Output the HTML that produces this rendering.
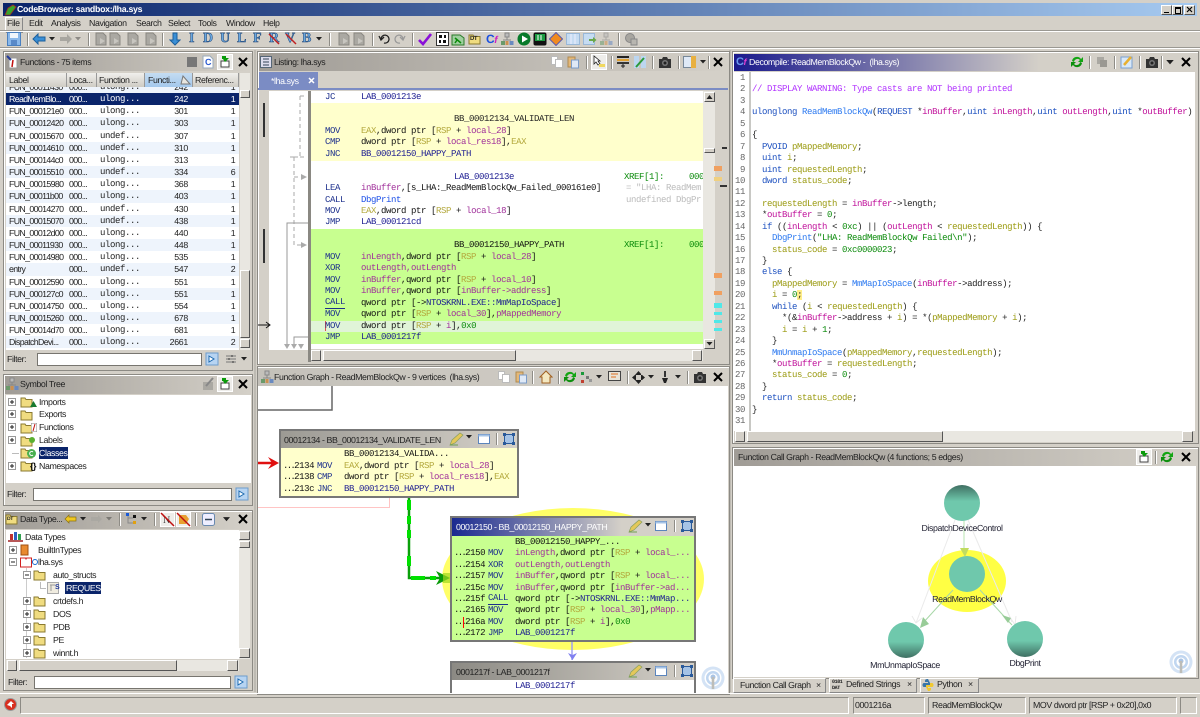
<!DOCTYPE html>
<html><head><meta charset="utf-8"><title>CodeBrowser</title>
<style>
html,body{margin:0;padding:0;width:1200px;height:717px;overflow:hidden;background:#d4d0c8;text-rendering:geometricPrecision}
#w{position:absolute;left:0;top:0;width:1200px;height:717px;overflow:hidden;background:#d4d0c8;filter:blur(.3px)}
#w div,#w svg{position:absolute}
#w div.s{position:relative}
.t{font:8.8px/12px "Liberation Sans",sans-serif;letter-spacing:-.4px;color:#222;white-space:pre}
.m{font:9px/12px "Liberation Mono",monospace;letter-spacing:-.4px;color:#111;white-space:pre}
.b{background:#fff}
.pn{border:1px solid #8c8a84;box-shadow:inset 1px 1px 0 #fff;background:#d4d0c8}
.tg{background:linear-gradient(90deg,#a09c96,#d4d0c8)}
.sb{background:#e9e7e1}
.bt{background:#d4d0c8;border:1px solid;border-color:#fff #555 #555 #fff;box-sizing:border-box}
.sep{width:1px;background:#8e8c86;border-right:1px solid #fff}
.th{background:linear-gradient(#f0efec,#cfccc4);box-sizing:border-box;border-right:1px solid #999;height:14px;top:73px}
.in{background:#fff;border:1px solid #77756f;box-sizing:border-box}
.s{width:233px;height:12.17px}
.s span{position:absolute;top:0;font:8.8px/12px "Liberation Sans",sans-serif;letter-spacing:-.65px;color:#222;white-space:pre}
.s .c1{left:3px}.s .c2{left:63px}.s .c3{left:94px;font:9px/12px "Liberation Mono",monospace;letter-spacing:-.4px}
.s .c4{right:51px;letter-spacing:-.3px}.s .c5{right:4px}
.alt{background:#eef4fc}
.sel{background:#0a246a}.sel span{color:#fff}
u{text-decoration:none}
u.d{letter-spacing:-1.7px}
.n{color:#1c2f8c}.l{color:#1a1a90}.r{color:#b3a83c}.v{color:#a0309a}.g{color:#0a8a0a}.f{color:#1b4fe8}.k{color:#222}
.cm{color:#b030ff}.ty{color:#1b4fbf}.yv{color:#9a9a10}.pa{color:#c0109a}.fn{color:#2a78f0}.ln{color:#666}
.ic{font:bold 14px/14px "Liberation Serif",serif;color:#6aa8e0;-webkit-text-stroke:.5px #1a3f70;letter-spacing:0}
.cx{transform:translateX(-50%);color:#223}
</style></head><body><div id="w">
<svg width="0" height="0" style="left:0;top:0"><defs>
<symbol id="x" viewBox="0 0 14 14"><path d="M3 3L11 11M11 3L3 11" stroke="#000" stroke-width="2" fill="none"/></symbol>
<symbol id="rf" viewBox="0 0 14 14"><path d="M2 6A5 5 0 0 1 11 4L13 2V7H8L10 5A3.500 3.500 0 0 0 4 7Z" fill="#13a613"/><path d="M12 8A5 5 0 0 1 3 10L1 12V7H6L4 9A3.500 3.500 0 0 0 10 7Z" fill="#0d8f0d"/></symbol>
<symbol id="cam" viewBox="0 0 14 14"><path d="M1 4H4L5 2H9L10 4H13V13H1Z" fill="#333"/><circle cx="7" cy="8" r="3" fill="#777"/><circle cx="7" cy="8" r="1.500" fill="#222"/></symbol>
<symbol id="cp" viewBox="0 0 14 14"><path d="M1.500 1.500H7.500V9.500H1.500Z" fill="#fff" stroke="#bbb"/><path d="M5.500 4.500H12.500V12.500H5.500Z" fill="#fff" stroke="#bbb"/></symbol>
<symbol id="ps" viewBox="0 0 14 14"><path d="M2 2H9V12H2Z" fill="#e4b878" stroke="#b08a50"/><path d="M5.500 5H12.500V13H5.500Z" fill="#dfe9f6" stroke="#7b9cc8"/></symbol>
<symbol id="fo" viewBox="0 0 14 14"><path d="M1 3H5L6 4.500H12V12H1Z" fill="#f0dc80" stroke="#8a7a30"/></symbol>
<symbol id="fi" viewBox="0 0 14 14"><rect x="1" y="1" width="12" height="12" fill="#b7d4f2" stroke="#6c9ccc"/><path d="M4 4L9 7L4 10Z" fill="#fff" stroke="#1d6ab0"/></symbol>
<symbol id="sl" viewBox="0 0 16 16"><rect x=".5" y=".5" width="15" height="15" fill="#eeedea" stroke="#fff"/><path d="M4 7H12V13H4Z" fill="#fff" stroke="#444"/><path d="M5 2H9V4H12L8 8L6 5H5Z" fill="#0a9a0a"/></symbol>
<symbol id="pl" viewBox="0 0 10 10"><rect x="1.500" y="1.500" width="7" height="7" fill="#fff" stroke="#999"/><path d="M3 5H7M5 3V7" stroke="#222"/></symbol>
<symbol id="mi" viewBox="0 0 10 10"><rect x="1.500" y="1.500" width="7" height="7" fill="#fff" stroke="#999"/><path d="M3 5H7" stroke="#222"/></symbol>
<symbol id="dd" viewBox="0 0 6 4"><path d="M0 0H6L3 3.500Z" fill="#222"/></symbol>
<symbol id="ed" viewBox="0 0 16 14"><path d="M1 13L3 8L11 1L14 3L6 11Z" fill="#e4c85a" stroke="#8aa060" stroke-width=".7"/><path d="M1 13H9" stroke="#70a050"/></symbol>
<symbol id="wn" viewBox="0 0 14 14"><rect x="1.500" y="2.500" width="11" height="9" fill="#fff" stroke="#5a84bc"/><rect x="1.500" y="2.500" width="11" height="2" fill="#a5c3e6"/></symbol>
<symbol id="mx" viewBox="0 0 14 14"><rect x="2.500" y="2.500" width="9" height="9" fill="#a5c3e6" stroke="#2a5a9a"/><path d="M1 1H4V4H1ZM10 1H13V4H10ZM1 10H4V13H1ZM10 10H13V13H10Z" fill="#2a5a9a"/></symbol>
<symbol id="tr" viewBox="0 0 14 14"><path d="M5 1H9V5H5Z" fill="#bbb" stroke="#888"/><path d="M7 5V8M3 8H11" stroke="#888"/><rect x="1" y="9" width="4" height="4" fill="#6a9a6a"/><rect x="5.500" y="9" width="3" height="4" fill="#cc9050"/><rect x="9.500" y="9" width="4" height="4" fill="#6a8ac0"/></symbol>
<symbol id="gd" viewBox="0 0 14 14"><path d="M2 1H9L12 4V13H2Z" fill="#aaa8a2" stroke="#8a8882"/><path d="M6 6L11 9L6 12Z" fill="#c8c6c0"/></symbol>
<symbol id="rad" viewBox="0 0 24 24"><circle cx="12" cy="12" r="11.500" fill="#d4e3f5"/><circle cx="12" cy="12" r="8.500" fill="#fff"/><circle cx="12" cy="12" r="7" fill="#c0d6f0"/><circle cx="12" cy="12" r="4.500" fill="#fff"/><circle cx="12" cy="11" r="2.500" fill="#aac4e4"/><rect x="10.700" y="11" width="2.600" height="12" fill="#bdbdb8"/></symbol>
</defs></svg>

<!-- title -->
<div style="left:3px;top:3px;width:1194px;height:13px;background:linear-gradient(90deg,#0a246a,#a6caf0)"></div>
<svg width="13" height="12" viewBox="0 0 13 12" style="left:4px;top:4px"><path d="M1 11L4 4L9 1L12 3L9 7L6 11Z" fill="#3aa52a" stroke="#a03020" stroke-width=".8"/></svg>
<div class="t" style="left:17px;top:3px;color:#fff;font-weight:bold;letter-spacing:-.3px">CodeBrowser: sandbox:/lha.sys</div>
<div class="bt" style="left:1161px;top:5px;width:11px;height:10px"></div><div class="bt" style="left:1172px;top:5px;width:11px;height:10px"></div><div class="bt" style="left:1184px;top:5px;width:11px;height:10px"></div>
<div style="left:1164px;top:11px;width:5px;height:1px;border-bottom:1px solid #000"></div>
<div style="left:1175px;top:7px;width:4px;height:4px;border:1px solid #000;border-top-width:2px"></div>
<svg width="7" height="7" viewBox="0 0 7 7" style="left:1186px;top:6px"><path d="M1 1L6 6M6 1L1 6" stroke="#000" stroke-width="1.200"/></svg>

<!-- menu -->
<div style="left:5px;top:17px;width:16px;height:14px;border:1px solid #fff;border-right-color:#888;border-bottom-color:#888"></div>
<div class="t" style="left:7px;top:17px">File</div>
<div class="t" style="left:29px;top:17px">Edit</div>
<div class="t" style="left:51px;top:17px">Analysis</div>
<div class="t" style="left:89px;top:17px">Navigation</div>
<div class="t" style="left:136px;top:17px">Search</div>
<div class="t" style="left:168px;top:17px">Select</div>
<div class="t" style="left:198px;top:17px">Tools</div>
<div class="t" style="left:226px;top:17px">Window</div>
<div class="t" style="left:263px;top:17px">Help</div>
<div style="left:0;top:30px;width:1200px;height:1px;background:#9a9892"></div><div style="left:0;top:31px;width:1200px;height:1px;background:#fff"></div>
<div style="left:0;top:47px;width:1200px;height:1px;background:#9a9892"></div><div style="left:0;top:48px;width:1200px;height:1px;background:#fff"></div>

<!-- main toolbar -->
<svg width="14" height="14" viewBox="0 0 14 14" style="left:7px;top:32px"><rect x=".5" y=".5" width="13" height="13" fill="#8ab8ea" stroke="#4a80c0"/><rect x="3" y="1" width="8" height="5" fill="#f0f6fc"/><rect x="4" y="8" width="6" height="5" fill="#5a8ac8"/></svg>
<div class="sep" style="left:27px;top:33px;height:13px"></div>
<svg width="14" height="12" viewBox="0 0 14 12" style="left:32px;top:33px"><path d="M1 6L6 1V4H13V8H6V11Z" fill="#3a8fd6" stroke="#1c5f9c"/></svg>
<svg width="6" height="4" style="left:49px;top:37px"><use href="#dd"/></svg>
<svg width="14" height="12" viewBox="0 0 14 12" style="left:59px;top:33px"><path d="M13 6L8 1V4H1V8H8V11Z" fill="#a8a6a0"/></svg>
<svg width="6" height="4" style="left:75px;top:37px;opacity:.4"><use href="#dd"/></svg>
<div class="sep" style="left:88px;top:33px;height:13px"></div>
<svg width="14" height="14" style="left:94px;top:32px"><use href="#gd"/></svg><svg width="14" height="14" style="left:108px;top:32px"><use href="#gd"/></svg><svg width="14" height="14" style="left:126px;top:32px"><use href="#gd"/></svg><svg width="14" height="14" style="left:144px;top:32px"><use href="#gd"/></svg>
<div class="sep" style="left:162px;top:33px;height:13px"></div>
<svg width="12" height="14" viewBox="0 0 12 14" style="left:169px;top:32px"><path d="M6 13L1 8H4V1H8V8H11Z" fill="#3a8fd6" stroke="#1c5f9c"/></svg>
<div class="ic" style="left:189px;top:32px">I</div>
<div class="ic" style="left:203px;top:32px">D</div>
<div class="ic" style="left:220px;top:32px">U</div>
<div class="ic" style="left:237px;top:32px">L</div>
<div class="ic" style="left:253px;top:32px">F</div>
<div class="ic" style="left:269px;top:32px">R</div>
<div class="ic" style="left:285px;top:32px">V</div>
<div class="ic" style="left:302px;top:32px">B</div>
<svg width="14" height="14" viewBox="0 0 14 14" style="left:267px;top:32px"><path d="M2 2L12 12" stroke="#c02020" stroke-width="1.500"/></svg><svg width="14" height="14" viewBox="0 0 14 14" style="left:284px;top:32px"><path d="M2 2L12 12" stroke="#c02020" stroke-width="1.500"/></svg>
<svg width="6" height="4" style="left:316px;top:37px"><use href="#dd"/></svg>
<div class="sep" style="left:329px;top:33px;height:13px"></div>
<svg width="14" height="14" style="left:337px;top:32px"><use href="#gd"/></svg><svg width="14" height="14" style="left:352px;top:32px"><use href="#gd"/></svg>
<div class="sep" style="left:372px;top:33px;height:13px"></div>
<svg width="12" height="12" viewBox="0 0 12 12" style="left:378px;top:33px"><path d="M3 6A4 4 0 1 1 6 10M1 3L3 7L6 4" stroke="#222" fill="none" stroke-width="1.300"/></svg>
<svg width="12" height="12" viewBox="0 0 12 12" style="left:394px;top:33px"><path d="M9 6A4 4 0 1 0 6 10M11 3L9 7L6 4" stroke="#999" fill="none" stroke-width="1.300"/></svg>
<div class="sep" style="left:412px;top:33px;height:13px"></div>
<svg width="14" height="14" viewBox="0 0 14 14" style="left:418px;top:32px"><path d="M1 8L5 12L13 2" stroke="#8a10d8" stroke-width="2.600" fill="none"/></svg>
<svg width="13" height="14" viewBox="0 0 13 14" style="left:436px;top:32px"><rect x=".5" y=".5" width="12" height="13" fill="#fff" stroke="#333"/><path d="M3 3H6V6H3ZM8 3H10V6H8ZM3 8H5V11H3ZM7 8H10V11H7Z" fill="#111"/></svg>
<svg width="14" height="14" viewBox="0 0 14 14" style="left:451px;top:32px"><path d="M1 3H9L13 6V13H1Z" fill="#9fcf9f" stroke="#2a7a2a"/><path d="M4 6L10 11M4 11L6 8" stroke="#0a8a0a" stroke-width="1.500"/></svg>
<svg width="14" height="14" style="left:468px;top:32px"><use href="#fo"/></svg><div class="t" style="left:470px;top:35px;font:bold 6px/8px 'Liberation Sans',sans-serif;color:#222">DT</div>
<div class="t" style="left:486px;top:32px;font:bold 12px/14px 'Liberation Sans',sans-serif;color:#1a4fe0">C<span style="color:#d020c0;font-style:italic;font-size:10px">f</span></div>
<svg width="14" height="14" style="left:500px;top:32px"><use href="#tr"/></svg>
<svg width="14" height="14" viewBox="0 0 14 14" style="left:517px;top:32px"><circle cx="7" cy="7" r="6.500" fill="#087a2a"/><path d="M5 3.500L11 7L5 10.500Z" fill="#fff"/></svg>
<svg width="14" height="14" viewBox="0 0 14 14" style="left:533px;top:32px"><rect x=".5" y=".5" width="13" height="13" rx="2" fill="#111"/><rect x="2" y="2" width="10" height="7" fill="#1c9a40"/><path d="M5 3V8M8 3V8" stroke="#fff"/></svg>
<svg width="14" height="14" viewBox="0 0 14 14" style="left:549px;top:32px"><path d="M7 .5L13.500 7L7 13.500L.5 7Z" fill="#f08a20" stroke="#5a5ab0"/></svg>
<svg width="14" height="14" viewBox="0 0 14 14" style="left:566px;top:32px"><rect x=".5" y="1.500" width="13" height="11" fill="#c6dcf2" stroke="#9ab8d8"/><path d="M5 2V12M9 2V12" stroke="#eef"/></svg>
<svg width="14" height="14" viewBox="0 0 14 14" style="left:583px;top:32px"><rect x=".5" y="1.500" width="11" height="11" fill="#c6dcf2" stroke="#9ab8d8"/><path d="M6 7H10V5L13.500 8L10 11V9H6Z" fill="#6aa84a"/></svg>
<svg width="14" height="14" style="left:599px;top:32px;opacity:.55"><use href="#tr"/></svg>
<div class="sep" style="left:618px;top:33px;height:13px"></div>
<svg width="14" height="14" viewBox="0 0 14 14" style="left:624px;top:32px"><circle cx="6" cy="6" r="4.500" fill="#a8a6a0" stroke="#888"/><rect x="7" y="7" width="6" height="6" fill="#b8b6b0" stroke="#888"/></svg>

<!-- dividers -->
<div style="left:254px;top:50px;width:2px;height:642px;background:#bdbab2"></div>
<div style="left:729px;top:50px;width:2px;height:642px;background:#bdbab2"></div>

<!-- FUNCTIONS PANEL -->
<div class="pn" style="left:3px;top:51px;width:248px;height:318px"></div>
<div class="tg" style="left:5px;top:53px;width:245px;height:18px"></div>
<svg width="12" height="14" viewBox="0 0 12 14" style="left:6px;top:55px"><path d="M3 3H11V13H3Z" fill="#fff" stroke="#999"/><path d="M1 1L5 5" stroke="#223a9a" stroke-width="2"/><path d="M7 5L6 12" stroke="#c01010" stroke-width="1.500"/></svg>
<div class="t" style="left:20px;top:56px">Functions - 75 items</div>
<div style="left:187px;top:57px;width:10px;height:10px;background:#777"></div>
<svg width="12" height="14" viewBox="0 0 12 14" style="left:202px;top:55px"><path d="M1 1H8L11 4V13H1Z" fill="#fff" stroke="#9ab"/></svg><div class="t" style="left:205px;top:56px;font:bold 9px/12px 'Liberation Sans',sans-serif;color:#2a5ad0">C</div>
<svg width="16" height="16" style="left:217px;top:54px"><use href="#sl"/></svg>
<svg width="14" height="14" style="left:236px;top:55px"><use href="#x"/></svg>
<div class="th" style="left:6px;width:61px"></div><div class="t" style="left:9px;top:74px">Label</div>
<div class="th" style="left:67px;width:30px"></div><div class="t" style="left:69px;top:74px">Loca...</div>
<div class="th" style="left:97px;width:48px"></div><div class="t" style="left:99px;top:74px">Function ...</div>
<div class="th" style="left:145px;width:48px;background:linear-gradient(#c4dcf2,#a4c8ec)"></div><div class="t" style="left:148px;top:74px">Functi...</div>
<svg width="11" height="10" viewBox="0 0 11 10" style="left:180px;top:75px"><path d="M1 9H10L3 1Z" fill="#e8e6e0" stroke="#777"/></svg>
<div class="th" style="left:193px;width:46px"></div><div class="t" style="left:195px;top:74px">Referenc...</div>
<div style="left:6px;top:87px;width:233px;height:263px;background:#fff;overflow:hidden"><div style="position:relative;left:0;top:-6px;width:233px">
<div class="s alt"><span class="c1">FUN_00011430</span><span class="c2">000...</span><span class="c3">ulong...</span><span class="c4">242</span><span class="c5">1</span></div>
<div class="s sel"><span class="c1">ReadMemBlo...</span><span class="c2">000...</span><span class="c3">ulong...</span><span class="c4">242</span><span class="c5">1</span></div>
<div class="s"><span class="c1">FUN_000121e0</span><span class="c2">000...</span><span class="c3">ulong...</span><span class="c4">301</span><span class="c5">1</span></div>
<div class="s alt"><span class="c1">FUN_00012420</span><span class="c2">000...</span><span class="c3">ulong...</span><span class="c4">303</span><span class="c5">1</span></div>
<div class="s"><span class="c1">FUN_00015670</span><span class="c2">000...</span><span class="c3">undef...</span><span class="c4">307</span><span class="c5">1</span></div>
<div class="s alt"><span class="c1">FUN_00014610</span><span class="c2">000...</span><span class="c3">undef...</span><span class="c4">310</span><span class="c5">1</span></div>
<div class="s"><span class="c1">FUN_000144c0</span><span class="c2">000...</span><span class="c3">ulong...</span><span class="c4">313</span><span class="c5">1</span></div>
<div class="s alt"><span class="c1">FUN_00015510</span><span class="c2">000...</span><span class="c3">undef...</span><span class="c4">334</span><span class="c5">6</span></div>
<div class="s"><span class="c1">FUN_00015980</span><span class="c2">000...</span><span class="c3">ulong...</span><span class="c4">368</span><span class="c5">1</span></div>
<div class="s alt"><span class="c1">FUN_00011b00</span><span class="c2">000...</span><span class="c3">ulong...</span><span class="c4">403</span><span class="c5">1</span></div>
<div class="s"><span class="c1">FUN_00014270</span><span class="c2">000...</span><span class="c3">undef...</span><span class="c4">430</span><span class="c5">1</span></div>
<div class="s alt"><span class="c1">FUN_00015070</span><span class="c2">000...</span><span class="c3">undef...</span><span class="c4">438</span><span class="c5">1</span></div>
<div class="s"><span class="c1">FUN_00012d00</span><span class="c2">000...</span><span class="c3">ulong...</span><span class="c4">440</span><span class="c5">1</span></div>
<div class="s alt"><span class="c1">FUN_00011930</span><span class="c2">000...</span><span class="c3">ulong...</span><span class="c4">448</span><span class="c5">1</span></div>
<div class="s"><span class="c1">FUN_00014980</span><span class="c2">000...</span><span class="c3">ulong...</span><span class="c4">535</span><span class="c5">1</span></div>
<div class="s alt"><span class="c1">entry</span><span class="c2">000...</span><span class="c3">undef...</span><span class="c4">547</span><span class="c5">2</span></div>
<div class="s"><span class="c1">FUN_00012590</span><span class="c2">000...</span><span class="c3">ulong...</span><span class="c4">551</span><span class="c5">1</span></div>
<div class="s alt"><span class="c1">FUN_000127c0</span><span class="c2">000...</span><span class="c3">ulong...</span><span class="c4">551</span><span class="c5">1</span></div>
<div class="s"><span class="c1">FUN_00014750</span><span class="c2">000...</span><span class="c3">ulong...</span><span class="c4">554</span><span class="c5">1</span></div>
<div class="s alt"><span class="c1">FUN_00015260</span><span class="c2">000...</span><span class="c3">ulong...</span><span class="c4">678</span><span class="c5">1</span></div>
<div class="s"><span class="c1">FUN_00014d70</span><span class="c2">000...</span><span class="c3">ulong...</span><span class="c4">681</span><span class="c5">1</span></div>
<div class="s alt"><span class="c1">DispatchDevi...</span><span class="c2">000...</span><span class="c3">ulong...</span><span class="c4">2661</span><span class="c5">2</span></div>
</div></div>
<div class="sb" style="left:240px;top:73px;width:10px;height:277px"></div>
<div class="bt" style="left:240px;top:90px;width:10px;height:8px"></div>
<div class="bt" style="left:240px;top:270px;width:10px;height:68px"></div>
<div class="bt" style="left:240px;top:339px;width:10px;height:9px"></div>
<div class="in" style="left:37px;top:353px;width:165px;height:13px"></div>
<div class="t" style="left:7px;top:353px">Filter:</div>
<svg width="14" height="14" style="left:205px;top:352px"><use href="#fi"/></svg>
<svg width="12" height="12" viewBox="0 0 12 12" style="left:225px;top:353px"><path d="M1 3H11M1 6H11M1 9H11" stroke="#777"/><path d="M7 2V4M4 5V7M8 8V10" stroke="#444"/></svg>
<svg width="6" height="4" style="left:241px;top:357px"><use href="#dd"/></svg>

<!-- SYMBOL TREE -->
<div class="pn" style="left:3px;top:374px;width:248px;height:130px"></div>
<div class="tg" style="left:5px;top:376px;width:245px;height:18px"></div>
<svg width="14" height="14" style="left:5px;top:377px"><use href="#tr"/></svg>
<div class="t" style="left:20px;top:378px">Symbol Tree</div>
<svg width="14" height="14" viewBox="0 0 14 14" style="left:201px;top:377px"><path d="M2 5H12V13H2Z" fill="#aaa8a2"/><path d="M5 9L12 1" stroke="#888" stroke-width="2"/></svg>
<svg width="16" height="16" style="left:217px;top:376px"><use href="#sl"/></svg>
<svg width="14" height="14" style="left:236px;top:377px"><use href="#x"/></svg>
<div class="b" style="left:6px;top:395px;width:245px;height:88px"></div>
<svg width="10" height="10" style="left:7px;top:397px"><use href="#pl"/></svg><svg width="14" height="14" style="left:20px;top:395px"><use href="#fo"/></svg><svg width="7" height="6" viewBox="0 0 7 6" style="left:30px;top:401px"><path d="M0 6L3.500 0L7 6Z" fill="#187a30"/></svg><div class="t" style="left:39px;top:396px">Imports</div>
<svg width="10" height="10" style="left:7px;top:409px"><use href="#pl"/></svg><svg width="14" height="14" style="left:20px;top:408px"><use href="#fo"/></svg><div class="t" style="left:39px;top:408px">Exports</div>
<svg width="10" height="10" style="left:7px;top:422px"><use href="#pl"/></svg><svg width="14" height="14" style="left:20px;top:421px"><use href="#fo"/></svg><svg width="6" height="9" viewBox="0 0 6 9" style="left:31px;top:423px"><rect width="6" height="9" fill="#fff" stroke="#888"/><path d="M4 1L2 8" stroke="#c01010"/></svg><div class="t" style="left:39px;top:421px">Functions</div>
<svg width="10" height="10" style="left:7px;top:435px"><use href="#pl"/></svg><svg width="14" height="14" style="left:20px;top:434px"><use href="#fo"/></svg><svg width="6" height="6" viewBox="0 0 6 6" style="left:29px;top:437px"><circle cx="3" cy="3" r="3" fill="#5ab030"/></svg><div class="t" style="left:39px;top:434px">Labels</div>
<div style="left:12px;top:453px;width:7px;height:1px;background:#bbb"></div>
<svg width="14" height="14" style="left:20px;top:446px"><use href="#fo"/></svg><svg width="9" height="9" viewBox="0 0 9 9" style="left:27px;top:449px"><circle cx="4.500" cy="4.500" r="4.500" fill="#4ab050"/><path d="M6 3A2 2 0 1 0 6 6" stroke="#fff" fill="none"/></svg>
<div style="left:39px;top:447px;width:29px;height:12px;background:#0a246a"></div><div class="t" style="left:39px;top:447px;color:#fff">Classes</div>
<svg width="10" height="10" style="left:7px;top:461px"><use href="#pl"/></svg><svg width="14" height="14" style="left:20px;top:459px"><use href="#fo"/></svg><div class="t" style="left:30px;top:460px;font-weight:bold;color:#000">{}</div><div class="t" style="left:39px;top:460px">Namespaces</div>
<div class="in" style="left:33px;top:488px;width:199px;height:13px"></div>
<div class="t" style="left:7px;top:488px">Filter:</div>
<svg width="14" height="14" style="left:235px;top:487px"><use href="#fi"/></svg>

<!-- DATA TYPES -->
<div class="pn" style="left:3px;top:510px;width:248px;height:179px"></div>
<div class="tg" style="left:5px;top:512px;width:245px;height:17px"></div>
<svg width="14" height="14" style="left:5px;top:512px"><use href="#fo"/></svg><div class="t" style="left:7px;top:515px;font:bold 5px/8px 'Liberation Sans',sans-serif">DT</div>
<div class="t" style="left:20px;top:513px">Data Type...</div>
<svg width="13" height="10" viewBox="0 0 13 10" style="left:64px;top:514px"><path d="M1 5L5 1V3H12V7H5V9Z" fill="#f0c820" stroke="#8a7010" stroke-width=".7"/></svg>
<svg width="6" height="4" style="left:80px;top:517px"><use href="#dd"/></svg>
<svg width="13" height="10" viewBox="0 0 13 10" style="left:90px;top:514px"><path d="M12 5L8 1V3H1V7H8V9Z" fill="#aaa8a2"/></svg>
<svg width="6" height="4" style="left:106px;top:517px;opacity:.4"><use href="#dd"/></svg>
<div class="sep" style="left:119px;top:513px;height:13px"></div>
<svg width="13" height="13" viewBox="0 0 13 13" style="left:125px;top:512px"><path d="M3 3V11H9M3 6H8" stroke="#888" fill="none"/><rect x="1" y="1" width="3" height="3" fill="#1a5ad8"/><rect x="8" y="3" width="3" height="3" fill="#111"/><rect x="8" y="9" width="3" height="3" fill="#e0a010"/></svg>
<svg width="6" height="4" style="left:141px;top:517px"><use href="#dd"/></svg>
<div class="sep" style="left:154px;top:513px;height:13px"></div>
<svg width="15" height="15" viewBox="0 0 15 15" style="left:160px;top:512px"><rect x=".5" y=".5" width="14" height="14" fill="#eeedea" stroke="#fff"/><text x="3" y="11" font-family="Liberation Serif" font-size="10" fill="#222">N</text><path d="M1 1L14 14" stroke="#c01010" stroke-width="1.500"/></svg>
<svg width="15" height="15" viewBox="0 0 15 15" style="left:176px;top:512px"><rect x=".5" y=".5" width="14" height="14" fill="#eeedea" stroke="#fff"/><path d="M3 3H10L13 7L10 12H3Z" fill="#e8a030"/><path d="M1 1L14 14" stroke="#c01010" stroke-width="1.500"/></svg>
<div class="sep" style="left:195px;top:513px;height:13px"></div>
<svg width="13" height="13" viewBox="0 0 13 13" style="left:202px;top:513px"><rect x=".5" y=".5" width="12" height="12" rx="2" fill="#eef" stroke="#6a8ab0"/><path d="M3 6.500H10" stroke="#345" stroke-width="1.500"/></svg>
<svg width="7" height="5" style="left:223px;top:517px"><use href="#dd"/></svg>
<svg width="14" height="14" style="left:236px;top:512px"><use href="#x"/></svg>
<div class="b" style="left:6px;top:530px;width:233px;height:129px"></div>
<svg width="16" height="12" viewBox="0 0 16 12" style="left:7px;top:531px"><rect x="3" y="3" width="3" height="6" fill="#c03030"/><rect x="7" y="1" width="3" height="8" fill="#3060c0"/><rect x="11" y="3" width="3" height="6" fill="#30a050"/><path d="M1 10H16" stroke="#a02020" stroke-width="1.500"/></svg><div class="t" style="left:25px;top:531px">Data Types</div>
<svg width="10" height="10" style="left:8px;top:545px"><use href="#pl"/></svg><svg width="10" height="12" viewBox="0 0 10 12" style="left:20px;top:544px"><path d="M1 1H8V11H1Z" fill="#e88a30" stroke="#a05010"/></svg><div class="t" style="left:38px;top:544px">BuiltInTypes</div>
<svg width="10" height="10" style="left:8px;top:557px"><use href="#mi"/></svg><svg width="12" height="11" viewBox="0 0 12 11" style="left:20px;top:557px"><path d="M.5 1H5.500L6 2L6.500 1H11.500V10H.5Z" fill="#fff" stroke="#d02020"/></svg><svg width="6" height="6" viewBox="0 0 6 6" style="left:32px;top:559px"><circle cx="3" cy="3" r="2.500" fill="#fff" stroke="#1a6ad0"/></svg><div class="t" style="left:38px;top:556px">lha.sys</div>
<div style="left:26px;top:568px;width:1px;height:90px;background:#ccc"></div>
<svg width="10" height="10" style="left:22px;top:570px"><use href="#mi"/></svg><svg width="14" height="14" style="left:33px;top:568px"><use href="#fo"/></svg><div class="t" style="left:53px;top:569px">auto_structs</div>
<div style="left:40px;top:582px;width:1px;height:6px;background:#bbb"></div><div style="left:40px;top:588px;width:6px;height:1px;background:#bbb"></div>
<svg width="12" height="12" viewBox="0 0 12 12" style="left:47px;top:582px"><rect x=".5" y=".5" width="11" height="11" fill="#f0ece0" stroke="#aaa"/><path d="M3 3L8 3M4 3V9" stroke="#999"/></svg><div class="t" style="left:55px;top:584px;font:bold 7px/8px 'Liberation Sans',sans-serif;color:#223a9a">S</div>
<div style="left:65px;top:582px;width:36px;height:12px;background:#0a246a"></div><div class="t" style="left:66px;top:582px;color:#fff">REQUEST</div>
<svg width="10" height="10" style="left:22px;top:596px"><use href="#pl"/></svg><svg width="14" height="14" style="left:33px;top:594px"><use href="#fo"/></svg><div class="t" style="left:53px;top:595px">crtdefs.h</div>
<svg width="10" height="10" style="left:22px;top:609px"><use href="#pl"/></svg><svg width="14" height="14" style="left:33px;top:607px"><use href="#fo"/></svg><div class="t" style="left:53px;top:608px">DOS</div>
<svg width="10" height="10" style="left:22px;top:622px"><use href="#pl"/></svg><svg width="14" height="14" style="left:33px;top:620px"><use href="#fo"/></svg><div class="t" style="left:53px;top:621px">PDB</div>
<svg width="10" height="10" style="left:22px;top:635px"><use href="#pl"/></svg><svg width="14" height="14" style="left:33px;top:633px"><use href="#fo"/></svg><div class="t" style="left:53px;top:634px">PE</div>
<svg width="10" height="10" style="left:22px;top:648px"><use href="#pl"/></svg><svg width="14" height="14" style="left:33px;top:646px"><use href="#fo"/></svg><div class="t" style="left:53px;top:647px">winnt.h</div>
<div class="sb" style="left:239px;top:530px;width:11px;height:129px"></div>
<div class="bt" style="left:239px;top:531px;width:11px;height:9px"></div><div class="bt" style="left:239px;top:541px;width:11px;height:7px"></div><div class="bt" style="left:239px;top:648px;width:11px;height:10px"></div>
<div class="sb" style="left:6px;top:660px;width:233px;height:11px"></div>
<div class="bt" style="left:7px;top:660px;width:10px;height:11px"></div><div class="bt" style="left:19px;top:660px;width:158px;height:11px"></div><div class="bt" style="left:227px;top:660px;width:11px;height:11px"></div>
<div class="in" style="left:34px;top:676px;width:197px;height:13px"></div>
<div class="t" style="left:8px;top:676px">Filter:</div>
<svg width="14" height="14" style="left:234px;top:675px"><use href="#fi"/></svg>

<!-- LISTING -->
<div class="pn" style="left:257px;top:51px;width:471px;height:312px"></div>
<div class="tg" style="left:259px;top:53px;width:468px;height:18px"></div>
<svg width="12" height="12" viewBox="0 0 12 12" style="left:260px;top:56px"><rect x=".5" y=".5" width="11" height="11" fill="#dde" stroke="#567"/><path d="M3 3H9M3 6H9M3 9H9" stroke="#345"/></svg>
<div class="t" style="left:274px;top:56px">Listing: lha.sys</div>
<svg width="14" height="14" style="left:550px;top:55px"><use href="#cp"/></svg><svg width="14" height="14" style="left:566px;top:55px"><use href="#ps"/></svg>
<div class="sep" style="left:586px;top:56px;height:13px"></div>
<svg width="16" height="16" viewBox="0 0 16 16" style="left:591px;top:54px"><rect x=".5" y=".5" width="15" height="15" fill="#eeedea" stroke="#fff"/><path d="M3 2V10L5 8L7 11L9 10L7 7L9 7Z" fill="#fff" stroke="#222" stroke-width=".8"/><rect x="8" y="10" width="6" height="3" fill="#f0d860"/></svg>
<div class="sep" style="left:611px;top:56px;height:13px"></div>
<svg width="14" height="14" viewBox="0 0 14 14" style="left:616px;top:55px"><rect x="1" y="1" width="12" height="2" fill="#222"/><rect x="1" y="4" width="12" height="2" fill="#e0a030"/><rect x="1" y="7" width="12" height="2" fill="#333"/><path d="M7 9V13M5 11H9" stroke="#222"/></svg>
<svg width="14" height="14" viewBox="0 0 14 14" style="left:633px;top:55px"><rect x="1" y="1" width="5" height="12" fill="#bcd6f0"/><rect x="8" y="1" width="5" height="12" fill="#bcd6f0"/><path d="M3 12L11 3" stroke="#2a9a3a" stroke-width="2"/></svg>
<div class="sep" style="left:652px;top:56px;height:13px"></div>
<svg width="14" height="14" style="left:658px;top:55px"><use href="#cam"/></svg>
<div class="sep" style="left:678px;top:56px;height:13px"></div>
<svg width="14" height="14" viewBox="0 0 14 14" style="left:683px;top:55px"><rect x=".5" y="1.500" width="9" height="11" fill="#dfe9f6" stroke="#789"/><rect x="8" y="1" width="5" height="12" fill="#e8b040"/></svg>
<svg width="6" height="4" style="left:700px;top:60px"><use href="#dd"/></svg>
<div class="sep" style="left:708px;top:56px;height:13px"></div>
<svg width="14" height="14" style="left:711px;top:55px"><use href="#x"/></svg>
<div style="left:259px;top:72px;width:59px;height:16px;background:#7b8cc4"></div>
<div class="t" style="left:271px;top:75px;color:#fff">*lha.sys</div>
<svg width="7" height="7" viewBox="0 0 7 7" style="left:308px;top:77px"><path d="M1 1L6 6M6 1L1 6" stroke="#fff" stroke-width="1.500"/></svg>
<div style="left:258px;top:88px;width:470px;height:2px;background:#7b8cc4"></div>
<div style="left:269px;top:91px;width:39px;height:259px;background:#fff"></div>
<div style="left:308px;top:91px;width:3px;height:271px;background:#8a8882"></div>
<div style="left:263px;top:103px;width:2px;height:34px;background:#333"></div>
<div style="left:263px;top:229px;width:2px;height:34px;background:#333"></div>
<svg width="52" height="262" viewBox="0 0 52 262" style="left:258px;top:91px">
<path d="M42 5V66H36M42 66H48M36 66V154H44M36 66H30M42 5H47M36 86H44" stroke="#aaa" stroke-dasharray="4 3" fill="none"/>
<path d="M50 132H29V254M50 246H36V254" stroke="#999" fill="none"/>
<path d="M43 83L49 86L43 89ZM43 151L49 154L43 157Z" fill="#aaa"/>
<path d="M26 253H32L29 258ZM33 253H39L36 258ZM40 253H46L43 258Z" fill="#aaa"/>
<path d="M0 234H11M8 231L12 234L8 237" stroke="#111" fill="none"/></svg>
<div class="b" style="left:311px;top:91px;width:392px;height:258px"></div>
<div style="left:311px;top:103px;width:392px;height:58px;background:#ffffcc"></div>
<div style="left:311px;top:229px;width:392px;height:115px;background:#c8ff90"></div>
<div style="left:311px;top:321px;width:392px;height:11px;background:#e0f4d8"></div>
<div style="left:325px;top:321px;width:1px;height:10px;background:#e05050"></div>
<div class="m n" style="left:325px;top:91px">JC</div><div class="m l" style="left:361px;top:91px">LAB_0001213e</div>
<div class="m" style="left:454px;top:113px;color:#222">BB_00012134_VALIDATE_LEN</div>
<div class="m n" style="left:325px;top:125px">MOV</div><div class="m" style="left:361px;top:125px"><u class="r">EAX</u>,dword ptr [<u class="r">RSP</u> + <u class="v">local_28</u>]</div>
<div class="m n" style="left:325px;top:136px">CMP</div><div class="m" style="left:361px;top:136px">dword ptr [<u class="r">RSP</u> + <u class="v">local_res18</u>],<u class="r">EAX</u></div>
<div class="m n" style="left:325px;top:148px">JNC</div><div class="m l" style="left:361px;top:148px">BB_00012150_HAPPY_PATH</div>
<div class="m l" style="left:454px;top:171px">LAB_0001213e</div><div class="m g" style="left:624px;top:171px">XREF[1]:</div><div class="m g" style="left:689px;top:171px;width:14px;overflow:hidden">000</div>
<div class="m n" style="left:325px;top:182px">LEA</div><div class="m" style="left:361px;top:182px"><u class="v">inBuffer</u>,[s_LHA:_ReadMemBlockQw_Failed_000161e0]</div><div class="m" style="left:626px;top:182px;color:#bbb;width:77px;overflow:hidden">= "LHA: ReadMem</div>
<div class="m n" style="left:325px;top:194px">CALL</div><div class="m f" style="left:361px;top:194px">DbgPrint</div><div class="m" style="left:626px;top:194px;color:#bbb;width:77px;overflow:hidden">undefined DbgPr</div>
<div class="m n" style="left:325px;top:205px">MOV</div><div class="m" style="left:361px;top:205px"><u class="r">EAX</u>,dword ptr [<u class="r">RSP</u> + <u class="v">local_18</u>]</div>
<div class="m n" style="left:325px;top:216px">JMP</div><div class="m l" style="left:361px;top:216px">LAB_000121cd</div>
<div class="m" style="left:454px;top:239px">BB_00012150_HAPPY_PATH</div><div class="m g" style="left:624px;top:239px">XREF[1]:</div><div class="m g" style="left:689px;top:239px;width:14px;overflow:hidden">000</div>
<div class="m n" style="left:325px;top:251px">MOV</div><div class="m" style="left:361px;top:251px"><u class="v">inLength</u>,dword ptr [<u class="r">RSP</u> + <u class="v">local_28</u>]</div>
<div class="m n" style="left:325px;top:262px">XOR</div><div class="m v" style="left:361px;top:262px">outLength,outLength</div>
<div class="m n" style="left:325px;top:274px">MOV</div><div class="m" style="left:361px;top:274px"><u class="v">inBuffer</u>,qword ptr [<u class="r">RSP</u> + <u class="v">local_10</u>]</div>
<div class="m n" style="left:325px;top:285px">MOV</div><div class="m" style="left:361px;top:285px"><u class="v">inBuffer</u>,qword ptr [<u class="v">inBuffer-&gt;address</u>]</div>
<div class="m n" style="left:325px;top:297px;border-bottom:1px solid #1c2f8c;height:11px;line-height:11px">CALL</div><div class="m" style="left:361px;top:297px">qword ptr [-&gt;<u class="l">NTOSKRNL.EXE::MmMapIoSpace</u>]</div>
<div class="m n" style="left:325px;top:308px">MOV</div><div class="m" style="left:361px;top:308px">qword ptr [<u class="r">RSP</u> + <u class="v">local_30</u>],<u class="v">pMappedMemory</u></div>
<div class="m n" style="left:325px;top:320px">MOV</div><div class="m" style="left:361px;top:320px">dword ptr [<u class="r">RSP</u> + <u class="v">i</u>],<u class="g">0x0</u></div>
<div class="m n" style="left:325px;top:331px">JMP</div><div class="m l" style="left:361px;top:331px">LAB_0001217f</div>
<div class="sb" style="left:703px;top:91px;width:12px;height:258px"></div>
<div class="bt" style="left:704px;top:92px;width:11px;height:10px"></div><div class="bt" style="left:704px;top:148px;width:11px;height:5px"></div><div class="bt" style="left:704px;top:339px;width:11px;height:10px"></div>
<svg width="7" height="4" style="left:706px;top:95px" viewBox="0 0 6 4"><path d="M0 4H6L3 0Z" fill="#222"/></svg>
<svg width="7" height="4" style="left:706px;top:342px"><use href="#dd"/></svg>
<div style="left:714px;top:166px;width:8px;height:5px;background:#f0a060"></div>
<div style="left:714px;top:177px;width:8px;height:4px;background:#f0d080"></div>
<div style="left:720px;top:185px;width:7px;height:2px;background:#333"></div>
<div style="left:722px;top:147px;width:5px;height:2px;background:#333"></div>
<div style="left:714px;top:273px;width:8px;height:5px;background:#f0a060"></div>
<div style="left:714px;top:291px;width:8px;height:4px;background:#f0a060"></div>
<div style="left:714px;top:303px;width:8px;height:5px;background:#50e8e8"></div>
<div style="left:714px;top:312px;width:8px;height:3px;background:#50e8e8"></div>
<div style="left:714px;top:320px;width:8px;height:3px;background:#50e8e8"></div>
<div style="left:714px;top:328px;width:8px;height:3px;background:#50e8e8"></div>
<div class="sb" style="left:311px;top:350px;width:392px;height:11px"></div>
<div class="bt" style="left:311px;top:350px;width:10px;height:11px"></div><div class="bt" style="left:323px;top:350px;width:193px;height:11px"></div><div class="bt" style="left:692px;top:350px;width:10px;height:11px"></div>

<!-- FUNCTION GRAPH -->
<div class="pn" style="left:257px;top:366px;width:471px;height:327px"></div>
<div class="tg" style="left:258px;top:368px;width:470px;height:18px;background:linear-gradient(90deg,#c4c1ba,#d4d0c8)"></div>
<svg width="14" height="14" style="left:260px;top:370px"><use href="#tr"/></svg>
<div class="t" style="left:274px;top:371px">Function Graph - ReadMemBlockQw - 9 vertices  (lha.sys)</div>
<svg width="14" height="14" style="left:497px;top:370px"><use href="#cp"/></svg><svg width="14" height="14" style="left:514px;top:370px"><use href="#ps"/></svg>
<div class="sep" style="left:532px;top:371px;height:13px"></div>
<svg width="14" height="14" viewBox="0 0 14 14" style="left:539px;top:370px"><path d="M1 7L7 1L13 7H11V13H3V7Z" fill="#f4e8c0" stroke="#a06020"/></svg>
<div class="sep" style="left:558px;top:371px;height:13px"></div>
<svg width="14" height="14" style="left:563px;top:370px"><use href="#rf"/></svg>
<svg width="12" height="12" viewBox="0 0 12 12" style="left:580px;top:371px"><rect x="1" y="1" width="3" height="3" fill="#1a9a3a"/><rect x="6" y="5" width="3" height="3" fill="#777"/><rect x="1" y="9" width="3" height="3" fill="#c04030"/><rect x="9" y="8" width="3" height="3" fill="#999"/></svg>
<svg width="6" height="4" style="left:596px;top:375px"><use href="#dd"/></svg>
<svg width="13" height="11" viewBox="0 0 13 11" style="left:608px;top:371px"><rect x=".5" y=".5" width="12" height="9" fill="#e8e4d8" stroke="#444"/><path d="M3 3H10M3 6H8" stroke="#e07020"/></svg>
<div class="sep" style="left:627px;top:371px;height:13px"></div>
<svg width="13" height="13" viewBox="0 0 13 13" style="left:632px;top:371px"><path d="M6.500 0L10 4H3ZM6.500 13L3 9H10ZM0 6.500L4 3V10ZM13 6.500L9 3V10Z" fill="#222"/></svg>
<svg width="6" height="4" style="left:648px;top:375px"><use href="#dd"/></svg>
<svg width="8" height="13" viewBox="0 0 8 13" style="left:661px;top:371px"><path d="M4 0V6" stroke="#333" stroke-width="2"/><path d="M1 7H7L5 12H3Z" fill="#222"/></svg>
<svg width="6" height="4" style="left:675px;top:375px"><use href="#dd"/></svg>
<div class="sep" style="left:687px;top:371px;height:13px"></div>
<svg width="14" height="14" style="left:693px;top:370px"><use href="#cam"/></svg>
<svg width="14" height="14" style="left:711px;top:370px"><use href="#x"/></svg>
<div class="b" style="left:258px;top:386px;width:470px;height:307px"></div>
<svg width="470" height="307" viewBox="258 386 470 307" style="left:258px;top:386px">
<ellipse cx="573" cy="579" rx="131" ry="71" fill="#ffff66"/>
<path d="M258 410H332V386" fill="none" stroke="#666" stroke-width="1.500"/>
<path d="M258 507.500H389.500V498" fill="none" stroke="#ffc4c4"/>
<path d="M258 463H274" stroke="#e01010" stroke-width="2.500"/><path d="M268 457L279 463L268 469L272 463Z" fill="#e01010"/>
<path d="M409 498V578H440" fill="none" stroke="#0aa00a" stroke-width="2.500"/>
<path d="M409 500V510M409 516V524M409 530V538M409 556V566M411 578H425M430 578H436" stroke="#00e000" stroke-width="4"/>
<path d="M436 571L450 578L436 585L440 578Z" fill="#0a9a0a"/><rect x="443" y="573" width="8" height="10" fill="#a0d820" opacity=".7"/>
<path d="M572 642V660" stroke="#a0a0f0" stroke-width="1.500"/><path d="M568 653L572.500 660L577 653L572.500 655Z" fill="#8080f0"/>
</svg>
<!-- v1 -->
<div style="left:279px;top:429px;width:240px;height:69px;background:#ffffcc;box-sizing:border-box;border:2px solid #777"></div>
<div style="left:281px;top:431px;width:236px;height:17px;background:linear-gradient(90deg,#9c9a94,#d4d0c8)"></div>
<div class="t" style="left:284px;top:434px">00012134 - BB_00012134_VALIDATE_LEN</div>
<svg width="16" height="14" style="left:449px;top:432px"><use href="#ed"/></svg><svg width="6" height="4" style="left:466px;top:435px"><use href="#dd"/></svg>
<svg width="14" height="14" style="left:477px;top:432px"><use href="#wn"/></svg><div class="sep" style="left:496px;top:433px;height:12px"></div><svg width="14" height="14" style="left:502px;top:432px"><use href="#mx"/></svg>
<div class="m" style="left:344px;top:448px">BB_00012134_VALIDA...</div>
<div class="m" style="left:283px;top:460px"><u class="d">...</u>2134</div><div class="m n" style="left:317px;top:460px">MOV</div><div class="m" style="left:344px;top:460px"><u class="r">EAX</u>,dword ptr [<u class="r">RSP</u> + <u class="v">local_28</u>]</div>
<div class="m" style="left:283px;top:471px"><u class="d">...</u>2138</div><div class="m n" style="left:317px;top:471px">CMP</div><div class="m" style="left:344px;top:471px">dword ptr [<u class="r">RSP</u> + <u class="v">local_res18</u>],<u class="r">EAX</u></div>
<div class="m" style="left:283px;top:483px"><u class="d">...</u>213c</div><div class="m n" style="left:317px;top:483px">JNC</div><div class="m l" style="left:344px;top:483px">BB_00012150_HAPPY_PATH</div>
<!-- v2 -->
<div style="left:450px;top:516px;width:246px;height:126px;background:#c8ff90;box-sizing:border-box;border:2px solid #777"></div>
<div style="left:452px;top:518px;width:242px;height:18px;background:linear-gradient(90deg,#1a2a90,#d4d0c8 70%)"></div>
<div class="t" style="left:456px;top:521px;color:#fff">00012150 - BB_00012150_HAPPY_PATH</div>
<svg width="16" height="14" style="left:628px;top:519px"><use href="#ed"/></svg><svg width="6" height="4" style="left:645px;top:523px"><use href="#dd"/></svg>
<svg width="14" height="14" style="left:654px;top:519px"><use href="#wn"/></svg><div class="sep" style="left:674px;top:520px;height:12px"></div><svg width="14" height="14" style="left:680px;top:519px"><use href="#mx"/></svg>
<div class="m" style="left:515px;top:536px">BB_00012150_HAPPY_...</div>
<div class="m" style="left:454px;top:547px"><u class="d">...</u>2150</div><div class="m n" style="left:488px;top:547px">MOV</div><div class="m" style="left:515px;top:547px"><u class="v">inLength</u>,dword ptr [<u class="r">RSP</u> + <u class="v">local_...</u></div>
<div class="m" style="left:454px;top:559px"><u class="d">...</u>2154</div><div class="m n" style="left:488px;top:559px">XOR</div><div class="m v" style="left:515px;top:559px">outLength,outLength</div>
<div class="m" style="left:454px;top:570px"><u class="d">...</u>2157</div><div class="m n" style="left:488px;top:570px">MOV</div><div class="m" style="left:515px;top:570px"><u class="v">inBuffer</u>,qword ptr [<u class="r">RSP</u> + <u class="v">local_...</u></div>
<div class="m" style="left:454px;top:582px"><u class="d">...</u>215c</div><div class="m n" style="left:488px;top:582px">MOV</div><div class="m" style="left:515px;top:582px"><u class="v">inBuffer</u>,qword ptr [<u class="v">inBuffer-&gt;ad...</u></div>
<div class="m" style="left:454px;top:593px"><u class="d">...</u>215f</div><div class="m n" style="left:488px;top:593px;border-bottom:1px solid #1c2f8c;height:11px;line-height:11px">CALL</div><div class="m" style="left:515px;top:593px">qword ptr [-&gt;<u class="l">NTOSKRNL.EXE::MmMap...</u></div>
<div class="m" style="left:454px;top:604px"><u class="d">...</u>2165</div><div class="m n" style="left:488px;top:604px">MOV</div><div class="m" style="left:515px;top:604px">qword ptr [<u class="r">RSP</u> + <u class="v">local_30</u>],<u class="v">pMapp...</u></div>
<div class="m" style="left:454px;top:616px"><u class="d">...</u>216a</div><div class="m n" style="left:488px;top:616px">MOV</div><div class="m" style="left:515px;top:616px">dword ptr [<u class="r">RSP</u> + <u class="v">i</u>],<u class="g">0x0</u></div>
<div style="left:463px;top:617px;width:1px;height:11px;background:#f00"></div>
<div class="m" style="left:454px;top:627px"><u class="d">...</u>2172</div><div class="m n" style="left:488px;top:627px">JMP</div><div class="m l" style="left:515px;top:627px">LAB_0001217f</div>
<!-- v3 -->
<div style="left:450px;top:661px;width:246px;height:32px;background:#fff;box-sizing:border-box;border:2px solid #777;border-bottom:0"></div>
<div style="left:452px;top:663px;width:242px;height:17px;background:linear-gradient(90deg,#8c8a84,#d4d0c8)"></div>
<div class="t" style="left:456px;top:666px">0001217f - LAB_0001217f</div>
<svg width="16" height="14" style="left:628px;top:664px"><use href="#ed"/></svg><svg width="6" height="4" style="left:645px;top:668px"><use href="#dd"/></svg>
<svg width="14" height="14" style="left:654px;top:664px"><use href="#wn"/></svg><div class="sep" style="left:674px;top:665px;height:12px"></div><svg width="14" height="14" style="left:680px;top:664px"><use href="#mx"/></svg>
<div class="m l" style="left:515px;top:680px">LAB_0001217f</div>
<svg width="24" height="24" style="left:701px;top:666px"><use href="#rad"/></svg>

<!-- DECOMPILE -->
<div class="pn" style="left:732px;top:51px;width:465px;height:391px"></div>
<div style="left:734px;top:54px;width:462px;height:17px;background:linear-gradient(90deg,#1a1a8c,#d4d0c8 66%)"></div>
<div class="t" style="left:736px;top:55px;font:bold 11px/14px 'Liberation Sans',sans-serif;color:#6a9af0">C<span style="color:#e040d0;font-style:italic;font-size:9px">f</span></div>
<div class="t" style="left:749px;top:56px;color:#fff">Decompile: ReadMemBlockQw -  (lha.sys)</div>
<svg width="14" height="14" style="left:1070px;top:55px"><use href="#rf"/></svg>
<div class="sep" style="left:1089px;top:56px;height:13px"></div>
<svg width="12" height="12" viewBox="0 0 12 12" style="left:1096px;top:56px"><rect x="1" y="1" width="7" height="7" fill="#aaa8a2"/><rect x="4" y="4" width="7" height="7" fill="#9a9892"/></svg>
<div class="sep" style="left:1114px;top:56px;height:13px"></div>
<svg width="14" height="14" viewBox="0 0 14 14" style="left:1120px;top:55px"><rect x="1" y="2" width="11" height="11" fill="#d8e8f8" stroke="#7aa0d0"/><path d="M4 10L11 2" stroke="#e8b030" stroke-width="2.500"/></svg>
<div class="sep" style="left:1139px;top:56px;height:13px"></div>
<svg width="14" height="14" style="left:1145px;top:55px"><use href="#cam"/></svg>
<div class="sep" style="left:1161px;top:56px;height:13px"></div>
<svg width="8" height="5" style="left:1166px;top:60px"><use href="#dd"/></svg>
<svg width="14" height="14" style="left:1179px;top:55px"><use href="#x"/></svg>
<div class="b" style="left:734px;top:72px;width:461px;height:359px"></div>
<div style="left:749px;top:72px;width:2px;height:359px;background:#c8c8c4"></div>
<div class="m ln" style="left:733px;top:73px;width:12px;text-align:right;line-height:11.43px;height:358px;white-space:pre-line;overflow:hidden">1
2
3
4
5
6
7
8
9
10
11
12
13
14
15
16
17
18
19
20
21
22
23
24
25
26
27
28
29
30
31</div>
<div class="m" style="left:752px;top:73px;line-height:11.43px;width:443px;height:358px;overflow:hidden;color:#222">
<u class="cm">// DISPLAY WARNING: Type casts are NOT being printed</u>

<u class="ty">ulonglong</u> <u class="fn">ReadMemBlockQw</u>(<u class="ty">REQUEST</u> *<u class="pa">inBuffer</u>,<u class="ty">uint</u> <u class="pa">inLength</u>,<u class="ty">uint</u> <u class="pa">outLength</u>,<u class="ty">uint</u> *<u class="pa">outBuffer</u>)

{
  <u class="ty">PVOID</u> <u class="yv">pMappedMemory</u>;
  <u class="ty">uint</u> <u class="yv">i</u>;
  <u class="ty">uint</u> <u class="yv">requestedLength</u>;
  <u class="ty">dword</u> <u class="yv">status_code</u>;

  <u class="yv">requestedLength</u> = <u class="pa">inBuffer</u>-&gt;length;
  *<u class="pa">outBuffer</u> = <u class="g">0</u>;
  <u class="ty">if</u> ((<u class="pa">inLength</u> &lt; <u class="g">0xc</u>) || (<u class="pa">outLength</u> &lt; <u class="yv">requestedLength</u>)) {
    <u class="fn">DbgPrint</u>(<u class="g">"LHA: ReadMemBlockQw Failed\n"</u>);
    <u class="yv">status_code</u> = <u class="g">0xc0000023</u>;
  }
  <u class="ty">else</u> {
    <u class="yv">pMappedMemory</u> = <u class="fn">MmMapIoSpace</u>(<u class="pa">inBuffer</u>-&gt;address);
    <u class="yv">i</u> = <u class="g">0</u><u style="background:#ffee88">;</u>
    <u class="ty">while</u> (<u class="yv">i</u> &lt; <u class="yv">requestedLength</u>) {
      *(&amp;<u class="pa">inBuffer</u>-&gt;address + <u class="yv">i</u>) = *(<u class="yv">pMappedMemory</u> + <u class="yv">i</u>);
      <u class="yv">i</u> = <u class="yv">i</u> + <u class="g">1</u>;
    }
    <u class="fn">MmUnmapIoSpace</u>(<u class="yv">pMappedMemory</u>,<u class="yv">requestedLength</u>);
    *<u class="pa">outBuffer</u> = <u class="yv">requestedLength</u>;
    <u class="yv">status_code</u> = <u class="g">0</u>;
  }
  <u class="ty">return</u> <u class="yv">status_code</u>;
}
</div>
<div class="sb" style="left:735px;top:431px;width:458px;height:11px"></div>
<div class="bt" style="left:735px;top:431px;width:10px;height:11px"></div><div class="bt" style="left:747px;top:431px;width:196px;height:11px"></div><div class="bt" style="left:1182px;top:431px;width:11px;height:11px"></div>

<!-- CALL GRAPH -->
<div class="pn" style="left:732px;top:447px;width:465px;height:230px"></div>
<div class="tg" style="left:734px;top:449px;width:462px;height:17px"></div>
<div class="t" style="left:738px;top:451px">Function Call Graph - ReadMemBlockQw (4 functions; 5 edges)</div>
<svg width="16" height="16" style="left:1136px;top:449px"><use href="#sl"/></svg>
<div class="sep" style="left:1155px;top:451px;height:13px"></div>
<svg width="14" height="14" style="left:1160px;top:450px"><use href="#rf"/></svg>
<svg width="14" height="14" style="left:1179px;top:450px"><use href="#x"/></svg>
<div class="b" style="left:733px;top:466px;width:463px;height:211px"></div>
<svg width="463" height="211" viewBox="733 466 463 211" style="left:733px;top:466px">
<defs><linearGradient id="gt" x1="0" y1="0" x2="0" y2="1"><stop offset="0" stop-color="#3f6f62"/><stop offset=".45" stop-color="#6fc8ac"/></linearGradient><linearGradient id="gb" x1="0" y1="0" x2="0" y2="1"><stop offset=".55" stop-color="#6fc8ac"/><stop offset="1" stop-color="#3f6f62"/></linearGradient></defs>
<ellipse cx="967" cy="581" rx="39" ry="31" fill="#ffff44"/>
<path d="M955 520L916 623M968 520L1012 622" stroke="#eaeaea"/>
<path d="M916 623L912 616M916 623L922 618M1015 625L1010 617M1015 625L1016 616" stroke="#eaeaea" fill="none"/>
<path d="M964 520V550" stroke="#b8e4b0"/><path d="M960 548L965 557L969 548Z" fill="#c0dc60"/>
<path d="M953 590L923 623" stroke="#a8d8a8"/><path d="M920 628L923 617L929 624Z" fill="#98cc98"/>
<path d="M980 590L1012 625" stroke="#a8d8a8"/><path d="M1008 623L1002 615L1011 618Z" fill="#98cc98"/>
<circle cx="962" cy="503" r="18" fill="url(#gt)"/>
<circle cx="967" cy="574" r="18" fill="#6fc8ac"/>
<circle cx="906" cy="640" r="18" fill="url(#gb)"/>
<circle cx="1025" cy="639" r="18" fill="url(#gb)"/>
</svg>
<div class="t cx" style="left:962px;top:522px">DispatchDeviceControl</div>
<div class="t cx" style="left:967px;top:593px">ReadMemBlockQw</div>
<div class="t cx" style="left:905px;top:659px">MmUnmapIoSpace</div>
<div class="t cx" style="left:1025px;top:657px">DbgPrint</div>
<svg width="24" height="24" style="left:1169px;top:650px"><use href="#rad"/></svg>
<!-- tabs -->
<div style="left:733px;top:678px;width:93px;height:15px;border:1px solid #888;border-top-color:#fff;border-left-color:#fff;box-sizing:border-box"></div>
<div class="t" style="left:740px;top:679px">Function Call Graph</div><div class="t" style="left:816px;top:679px">×</div>
<div style="left:829px;top:678px;width:88px;height:15px;border:1px solid #888;border-top-color:#fff;border-left-color:#fff;box-sizing:border-box"></div>
<div class="t" style="left:832px;top:679px;font:bold 5px/6px 'Liberation Mono',monospace;white-space:pre-line;color:#222">0101
DAT</div><div class="t" style="left:846px;top:678px">Defined Strings</div><div class="t" style="left:907px;top:678px">×</div>
<div style="left:920px;top:678px;width:59px;height:15px;border:1px solid #888;border-top-color:#fff;border-left-color:#fff;box-sizing:border-box"></div>
<svg width="12" height="12" viewBox="0 0 12 12" style="left:922px;top:679px"><path d="M6 0C3 0 3 1 3 3H6V4H2C0 4 0 8 2 8H4V6H8V4Z" fill="#3a76a8"/><path d="M6 12C9 12 9 11 9 9H6V8H10C12 8 12 4 10 4H8V6H4V8Z" fill="#f0c830"/></svg>
<div class="t" style="left:937px;top:678px">Python</div><div class="t" style="left:968px;top:678px">×</div>
<!-- status -->
<div style="left:0;top:693px;width:1200px;height:1px;background:#fff"></div>
<svg width="13" height="13" viewBox="0 0 13 13" style="left:4px;top:698px"><circle cx="6.500" cy="6.500" r="6" fill="#d83020" stroke="#999"/><path d="M3 7L7 3L10 6L8 6L8 10L6 8Z" fill="#fff"/></svg>
<div style="left:20px;top:697px;width:829px;height:17px;border:1px solid;border-color:#8c8a84 #fff #fff #8c8a84;box-sizing:border-box"></div>
<div style="left:853px;top:697px;width:72px;height:17px;border:1px solid;border-color:#8c8a84 #fff #fff #8c8a84;box-sizing:border-box"></div>
<div style="left:928px;top:697px;width:98px;height:17px;border:1px solid;border-color:#8c8a84 #fff #fff #8c8a84;box-sizing:border-box"></div>
<div style="left:1029px;top:697px;width:148px;height:17px;border:1px solid;border-color:#8c8a84 #fff #fff #8c8a84;box-sizing:border-box"></div>
<div style="left:1180px;top:697px;width:17px;height:17px;border:1px solid;border-color:#8c8a84 #fff #fff #8c8a84;box-sizing:border-box"></div>
<div class="t" style="left:855px;top:699px">0001216a</div>
<div class="t" style="left:932px;top:699px">ReadMemBlockQw</div>
<div class="t" style="left:1033px;top:699px">MOV dword ptr [RSP + 0x20],0x0</div>
</div></body></html>
